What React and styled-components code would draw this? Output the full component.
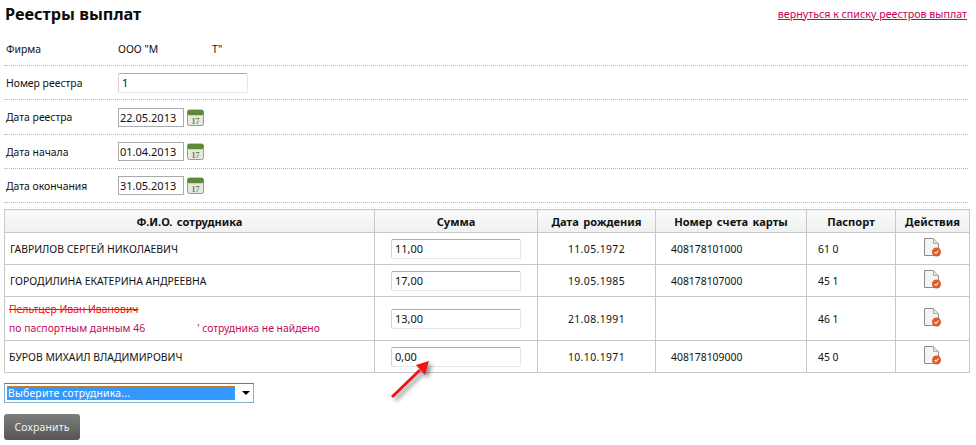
import React from 'react';
import styled, { createGlobalStyle } from 'styled-components';

const Global = createGlobalStyle`
  html, body { margin: 0; padding: 0; background: #fff; }
  body { font-family: "Noto Sans", "Liberation Sans", sans-serif; font-size: 10.4px; color: #111; }
`;

const Page = styled.div`
  position: relative;
  width: 976px;
  height: 445px;
  overflow: hidden;
  padding: 0 8px 0 4px;
  box-sizing: border-box;
`;

const Header = styled.div`
  display: flex;
  justify-content: space-between;
  align-items: center;
  height: 27px;
  margin-bottom: 5px;
`;

const Title = styled.h1`
  margin: 0 0 0 1px;
  font-size: 16.3px;
  font-weight: 700;
  color: #0c0c0c;
`;

const BackLink = styled.a`
  color: #c8005a;
  font-size: 10.7px;
  text-decoration: underline;
  padding-right: 1px;
`;

const FormRow = styled.div`
  display: flex;
  align-items: center;
  height: ${p => p.$h || 34}px;
  box-sizing: border-box;
  border-bottom: 1px dotted #b5b5b5;
`;

const Label = styled.div`
  width: 114px;
  padding-left: 2px;
  box-sizing: border-box;
`;

const Gap = styled.span`
  display: inline-block;
  width: ${p => p.$w}px;
`;

const TextInput = styled.input`
  box-sizing: border-box;
  width: ${p => p.$w || 130}px;
  height: 20px;
  padding: 0 3px;
  margin: 0;
  border: 1px solid #e2e5ec;
  border-top-color: #aaa;
  border-left-color: #d5d5d5;
  border-radius: 2px;
  font: inherit;
  font-size: 11px;
  color: #111;
  background: #fff;
`;

const DateInput = styled.input`
  box-sizing: border-box;
  width: 66px;
  height: 19px;
  padding: 0 1px;
  margin: 0 3px 0 0;
  border: 1px solid #aaa;
  font: inherit;
  font-size: 11px;
  color: #111;
`;

const Grid = styled.table`
  width: 965px;
  margin-top: 6px;
  border-collapse: collapse;
  table-layout: fixed;
`;

const Th = styled.th`
  height: 22px;
  padding: 0;
  border: 1px solid #c8c8c8;
  background: linear-gradient(#fafafa, #eff0f0);
  font-size: 11.1px;
  font-weight: 700;
  word-spacing: 1.5px;
  color: #111;
`;

const Td = styled.td`
  height: ${p => p.$h || 31}px;
  padding: 0 0 0 ${p => p.$pad ?? 0}px;
  border: 1px solid #c8c8c8;
  text-align: ${p => p.$center ? 'center' : 'left'};
  vertical-align: middle;
`;

const BirthDate = styled.span`
  letter-spacing: 0.4px;
`;

const Struck = styled.div`
  color: #f01010;
  text-decoration: line-through;
  margin-bottom: 5px;
`;

const Warning = styled.div`
  color: #c00a5a;
  white-space: pre;
`;

const SelectBox = styled.div`
  display: flex;
  align-items: center;
  justify-content: space-between;
  box-sizing: border-box;
  width: 250px;
  height: 20px;
  margin-top: 10px;
  padding: 0 3px 0 2px;
  border: 1px solid #7fb0d4;
  border-top-color: #3f86b8;
`;

const Select = styled.select`
  appearance: none;
  width: 228px;
  height: 14px;
  padding: 0 1px;
  border: 0;
  outline: 1px dotted #c9802a;
  outline-offset: -1px;
  background: #3399ff;
  color: #fff;
  font: inherit;
  letter-spacing: 0.2px;
`;

const Caret = styled.span`
  width: 0;
  height: 0;
  border-left: 4px solid transparent;
  border-right: 4px solid transparent;
  border-top: 4px solid #000;
`;

const SaveButton = styled.button`
  display: block;
  width: 76px;
  height: 26px;
  margin-top: 11px;
  padding: 0;
  border: 0;
  border-radius: 3px;
  background: linear-gradient(#7c7e7e, #555757);
  color: #f0f0f0;
  font: inherit;
  letter-spacing: 0.2px;
`;

const ArrowMark = styled.svg`
  position: absolute;
  left: 385px;
  top: 355px;
`;

const CalendarSvg = styled.svg`
  flex: none;
`;

const DeleteSvg = styled.svg`
  display: block;
  margin: 0 auto 3px;
`;

const CalendarIcon = () => (
  <CalendarSvg width="17" height="17" viewBox="0 0 18 18">
    <rect x="0.5" y="1" width="17" height="16.5" rx="2" fill="#e6e9dc" stroke="#8a9a78" />
    <rect x="0.5" y="1" width="17" height="5.5" rx="2" fill="#5f8a35" />
    <rect x="2" y="6.5" width="14" height="1" fill="#c7d3b4" />
    <text x="9" y="15.5" textAnchor="middle" fontSize="8.5" fontWeight="700" fontFamily="Liberation Serif, serif" fill="#6d7a66">17</text>
  </CalendarSvg>
);

const DeleteIcon = () => (
  <DeleteSvg width="18" height="19" viewBox="0 0 18 19">
    <path d="M0.5 0.5h9l5 5v12h-14z" fill="#f4f4f4" stroke="#8c8c8c" />
    <path d="M9.5 0.5v5h5" fill="#e2e2e2" stroke="#b0b0b0" />
    <circle cx="12.5" cy="14" r="4.5" fill="#dd5a22" />
    <path d="M10.5 14l1.5 1.5 2.5-3" fill="none" stroke="#f6d5c5" strokeWidth="1.2" />
  </DeleteSvg>
);

const employees = [
  { name: 'ГАВРИЛОВ СЕРГЕЙ НИКОЛАЕВИЧ', pad: 5, h: 30, sum: '11,00', born: '11.05.1972', card: '408178101000', passport: '61 0' },
  { name: 'ГОРОДИЛИНА ЕКАТЕРИНА АНДРЕЕВНА', pad: 5, h: 31, sum: '17,00', born: '19.05.1985', card: '408178107000', passport: '45 1' },
  { missing: true, h: 43, sum: '13,00', born: '21.08.1991', card: '', passport: '46 1' },
  { name: 'БУРОВ МИХАИЛ ВЛАДИМИРОВИЧ', pad: 4, h: 31, sum: '0,00', born: '10.10.1971', card: '408178109000', passport: '45 0' },
];

const dates = [
  { label: 'Дата реестра', value: '22.05.2013', h: 35 },
  { label: 'Дата начала', value: '01.04.2013', h: 34 },
  { label: 'Дата окончания', value: '31.05.2013', h: 34 },
];

export default function App() {
  return (
    <Page>
      <Global />
      <Header>
        <Title>Реестры выплат</Title>
        <BackLink href="#">вернуться к списку реестров выплат</BackLink>
      </Header>

      <FormRow $h={34}>
        <Label>Фирма</Label>
        <div>{'ООО "М'}<Gap $w={54} />{'Т"'}</div>
      </FormRow>
      <FormRow>
        <Label>Номер реестра</Label>
        <TextInput defaultValue="1" />
      </FormRow>
      {dates.map(d => (
        <FormRow key={d.label} $h={d.h}>
          <Label>{d.label}</Label>
          <DateInput defaultValue={d.value} />
          <CalendarIcon />
        </FormRow>
      ))}

      <Grid>
        <colgroup>
          <col style={{ width: 370 }} />
          <col style={{ width: 163 }} />
          <col style={{ width: 118 }} />
          <col style={{ width: 151 }} />
          <col style={{ width: 89 }} />
          <col style={{ width: 74 }} />
        </colgroup>
        <thead>
          <tr>
            <Th>Ф.И.О. сотрудника</Th>
            <Th>Сумма</Th>
            <Th>Дата рождения</Th>
            <Th>Номер счета карты</Th>
            <Th>Паспорт</Th>
            <Th>Действия</Th>
          </tr>
        </thead>
        <tbody>
          {employees.map(e => (
            <tr key={e.sum}>
              <Td $h={e.h} $pad={e.missing ? 4 : e.pad}>
                {e.missing ? (
                  <>
                    <Struck>Пельтцер Иван Иванович</Struck>
                    <Warning>по паспортным данным 46<Gap $w={52} />{"' сотрудника не найдено"}</Warning>
                  </>
                ) : e.name}
              </Td>
              <Td $pad={16}><TextInput defaultValue={e.sum} /></Td>
              <Td $center><BirthDate>{e.born}</BirthDate></Td>
              <Td $pad={15}>{e.card}</Td>
              <Td $pad={11}>{e.passport}</Td>
              <Td $center><DeleteIcon /></Td>
            </tr>
          ))}
        </tbody>
      </Grid>

      <SelectBox>
        <Select><option>Выберите сотрудника...</option></Select>
        <Caret />
      </SelectBox>
      <SaveButton>Сохранить</SaveButton>

      <ArrowMark width="56" height="56" viewBox="0 0 56 56">
        <defs>
          <filter id="arrow-shadow" x="-30%" y="-30%" width="170%" height="170%">
            <feDropShadow dx="3" dy="3" stdDeviation="2" floodColor="#000" floodOpacity="0.45" />
          </filter>
        </defs>
        <g filter="url(#arrow-shadow)">
          <path d="M7 42L35 15" stroke="#f01414" strokeWidth="3" fill="none" />
          <path d="M44 6L40 20L31 10z" fill="#f01414" />
        </g>
      </ArrowMark>
    </Page>
  );
}
